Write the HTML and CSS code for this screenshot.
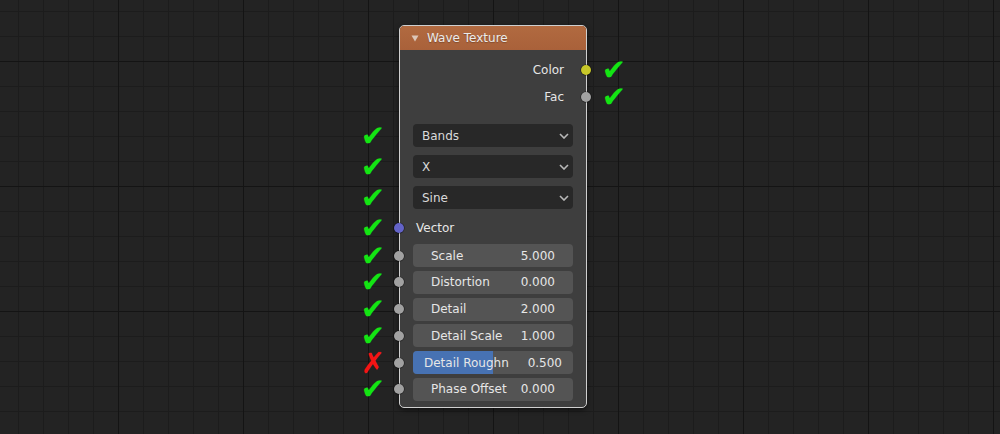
FILE: index.html
```html
<!DOCTYPE html>
<html>
<head>
<meta charset="utf-8">
<link rel="stylesheet" href="styles.css">
</head>
<body>
<div class="canvas">
  <div class="node">
    <div class="header">
      <svg class="collapse" width="8" height="7" viewBox="0 0 8 7"><polygon points="0.5,0.5 7.5,0.5 4,6.5" fill="#dcc6b8"/></svg>
      <span class="title">Wave Texture</span>
    </div>
    <div class="body">
      <div class="row out first">
        <span class="out-label">Color</span>
        <i class="socket sock-right yellow"></i>
        <span class="mark ok mark-right">✔</span>
      </div>
      <div class="row out">
        <span class="out-label">Fac</span>
        <i class="socket sock-right gray"></i>
        <span class="mark ok mark-right">✔</span>
      </div>

      <div class="row menu-row first-menu">
        <span class="mark ok mark-left">✔</span>
        <div class="menu"><span>Bands</span><svg class="chev" width="10" height="6" viewBox="0 0 10 6"><polyline points="1,1 5,5 9,1" fill="none" stroke="#b8b8b8" stroke-width="1.6"/></svg></div>
      </div>
      <div class="row menu-row">
        <span class="mark ok mark-left">✔</span>
        <div class="menu"><span>X</span><svg class="chev" width="10" height="6" viewBox="0 0 10 6"><polyline points="1,1 5,5 9,1" fill="none" stroke="#b8b8b8" stroke-width="1.6"/></svg></div>
      </div>
      <div class="row menu-row">
        <span class="mark ok mark-left">✔</span>
        <div class="menu"><span>Sine</span><svg class="chev" width="10" height="6" viewBox="0 0 10 6"><polyline points="1,1 5,5 9,1" fill="none" stroke="#b8b8b8" stroke-width="1.6"/></svg></div>
      </div>

      <div class="row vec-row">
        <i class="socket sock-left blue"></i>
        <span class="mark ok mark-left">✔</span>
        <span class="vec-label">Vector</span>
      </div>

      <div class="row field-row first-field">
        <i class="socket sock-left gray"></i>
        <span class="mark ok mark-left">✔</span>
        <div class="field"><span class="fl">Scale</span><span class="fv">5.000</span></div>
      </div>
      <div class="row field-row">
        <i class="socket sock-left gray"></i>
        <span class="mark ok mark-left">✔</span>
        <div class="field"><span class="fl">Distortion</span><span class="fv">0.000</span></div>
      </div>
      <div class="row field-row">
        <i class="socket sock-left gray"></i>
        <span class="mark ok mark-left">✔</span>
        <div class="field"><span class="fl">Detail</span><span class="fv">2.000</span></div>
      </div>
      <div class="row field-row">
        <i class="socket sock-left gray"></i>
        <span class="mark ok mark-left">✔</span>
        <div class="field"><span class="fl">Detail Scale</span><span class="fv">1.000</span></div>
      </div>
      <div class="row field-row">
        <i class="socket sock-left gray"></i>
        <span class="mark bad mark-left">✗</span>
        <div class="field slider"><div class="fill" style="width:50%"></div><span class="fl">Detail Roughn</span><span class="fv">0.500</span></div>
      </div>
      <div class="row field-row">
        <i class="socket sock-left gray"></i>
        <span class="mark ok mark-left">✔</span>
        <div class="field"><span class="fl">Phase Offset</span><span class="fv">0.000</span></div>
      </div>
    </div>
  </div>
</div>
</body>
</html>
```

FILE: styles.css
```css
html, body {
  margin: 0;
  padding: 0;
}
body {
  width: 1000px;
  height: 434px;
  overflow: hidden;
  font-family: "DejaVu Sans", "Liberation Sans", sans-serif;
  font-size: 12px;
  color: #e6e6e6;
}
.canvas {
  position: relative;
  width: 1000px;
  height: 434px;
  background-color: #232323;
  background-image:
    linear-gradient(to right, #141414 1px, transparent 1px),
    linear-gradient(to bottom, #141414 1px, transparent 1px),
    linear-gradient(to right, #1c1c1c 1px, transparent 1px),
    linear-gradient(to bottom, #1c1c1c 1px, transparent 1px);
  background-size: 125px 125px, 125px 125px, 25px 25px, 25px 25px;
  background-position: 118px 0, 0 61px, 18px 0, 0 11px;
}
.node {
  position: absolute;
  left: 399px;
  top: 25px;
  width: 188px;
  height: 383px;
  box-sizing: border-box;
  border: 1px solid #cfcfcf;
  border-radius: 5px;
  background: #3e3e3e;
  box-shadow: 0 2px 5px rgba(0, 0, 0, 0.55);
}
.header {
  height: 24px;
  display: flex;
  align-items: center;
  background: linear-gradient(#b16a40, #a9613a);
  border-radius: 4px 4px 0 0;
  position: relative;
}
.collapse {
  margin-left: 11px;
  margin-right: 8px;
  margin-top: 1px;
}
.title {
  color: #ebebeb;
  text-shadow: 0 1px 1px rgba(0, 0, 0, 0.25);
}
.body {
  display: flex;
  flex-direction: column;
}
.row {
  position: relative;
  display: flex;
  align-items: center;
}
.out {
  height: 26.5px;
  justify-content: flex-end;
  padding-right: 22px;
}
.out.first {
  margin-top: 7px;
}
.socket {
  position: absolute;
  width: 10px;
  height: 10px;
  border-radius: 50%;
  top: 50%;
  margin-top: -5px;
  box-shadow: 0 0 0 0.6px rgba(0, 0, 0, 0.55);
}
.sock-left {
  left: -6px;
}
.sock-right {
  left: 181px;
}
.yellow { background: #c7c729; }
.gray { background: #a1a1a1; }
.blue { background: #6363c7; }
.mark {
  position: absolute;
  width: 28px;
  text-align: center;
  font-size: 29px;
  line-height: 20px;
  height: 20px;
  top: 50%;
  margin-top: -10px;
}
.mark-left {
  left: -41px;
}
.mark-right {
  left: 200px;
}
.ok { color: #13e513; }
.bad { color: #f41414; }
.menu-row {
  height: 23px;
  margin-top: 8px;
}
.menu-row.first-menu {
  margin-top: 14px;
}
.menu {
  flex: 1;
  height: 23px;
  margin: 0 13px;
  background: #282828;
  border-radius: 4px;
  display: flex;
  align-items: center;
  justify-content: space-between;
  padding: 0 4px 0 9px;
  color: #dadada;
}
.chev {
  display: block;
}
.vec-row {
  height: 23px;
  margin-top: 7.5px;
}
.vec-label {
  margin-left: 16px;
}
.field-row {
  height: 23px;
  margin-top: 3.7px;
}
.field-row.first-field {
  margin-top: 4.8px;
}
.field {
  position: relative;
  flex: 1;
  height: 23px;
  margin: 0 13px;
  background: #545454;
  border-radius: 4px;
  display: flex;
  align-items: center;
  justify-content: space-between;
  padding: 0 18px 0 18px;
  overflow: hidden;
}
.field.slider {
  padding: 0 11px 0 11px;
}
.fill {
  position: absolute;
  left: 0;
  top: 0;
  bottom: 0;
  background: #4772b3;
}
.fl, .fv {
  position: relative;
  white-space: nowrap;
}
```
